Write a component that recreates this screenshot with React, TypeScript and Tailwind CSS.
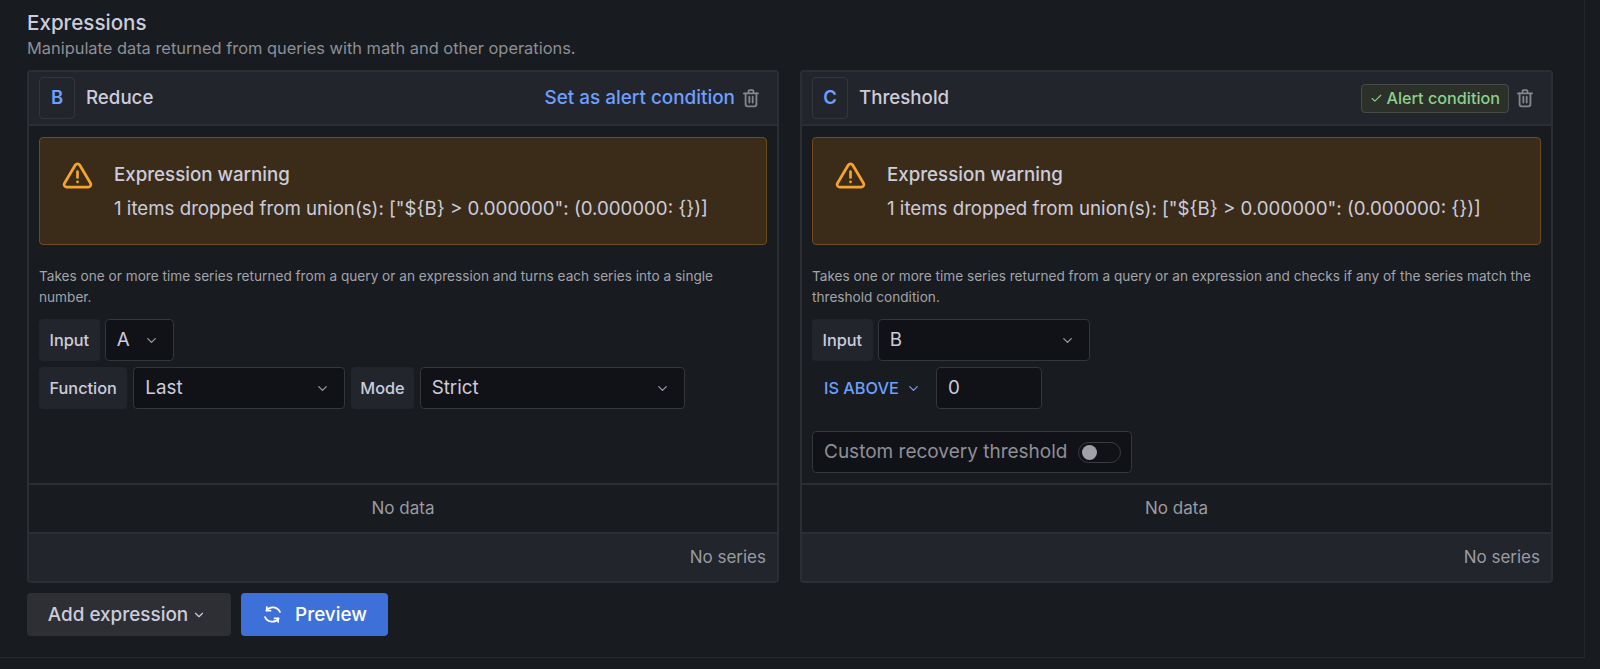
import React from 'react';
import { ChevronDown, Check } from 'lucide-react';

const TrashIcon = () => (
  <svg viewBox="0 0 24 24" className="w-[20px] h-[20px] text-[#85868c]" fill="none" stroke="currentColor" strokeWidth="2.2" strokeLinecap="round" strokeLinejoin="round">
    <path d="M3.5 6.5h17" />
    <path d="M9 6V4a1.5 1.5 0 0 1 1.5-1.5h3A1.5 1.5 0 0 1 15 4v2" />
    <path d="M5.5 6.5v13A2.5 2.5 0 0 0 8 22h8a2.5 2.5 0 0 0 2.5-2.5v-13" />
    <path d="M10 10.5v7M14 10.5v7" />
  </svg>
);

const WarningIcon = () => (
  <svg viewBox="0 0 24 24" className="w-[31px] h-[31px] text-[#f5a52c] shrink-0" fill="none" stroke="currentColor" strokeWidth="2.1" strokeLinecap="round" strokeLinejoin="round">
    <path d="M10.3 3.9 1.8 18.2A2 2 0 0 0 3.5 21h17a2 2 0 0 0 1.7-2.8L13.7 3.9a2 2 0 0 0-3.4 0Z" />
    <path d="M12 9v4.5" />
    <path d="M12 17h.01" />
  </svg>
);

const SyncIcon = () => (
  <svg viewBox="0 0 24 24" className="w-[21px] h-[21px]" fill="none" stroke="currentColor" strokeWidth="2" strokeLinecap="round" strokeLinejoin="round">
    <path d="M5 7.5A9 9 0 0 1 20.5 9" />
    <path d="M5.5 3.5v4.2h4.2" />
    <path d="M19 16.5A9 9 0 0 1 3.5 15" />
    <path d="M18.5 20.5v-4.2h-4.2" />
  </svg>
);

const Label = ({ children, padding = 'px-[10.5px]' }: { children: React.ReactNode; padding?: string }) => (
  <div className={`h-[42px] flex items-center rounded-sm bg-[#22252b] text-[16.3px] font-medium text-[#ccccdc] ${padding}`}>
    {children}
  </div>
);

const Select = ({ value, width }: { value: string; width: string }) => (
  <div className={`h-[42px] pl-[11px] pr-[14px] flex items-center justify-between rounded-sm bg-[#111217] border border-[#34363b] text-[18.8px] text-[#ccccdc] ${width}`}>
    <span>{value}</span>
    <ChevronDown size={15} className="text-[#9a9ba3]" />
  </div>
);

const Warning = () => (
  <div className="mx-[10px] mt-[11px] h-[108px] flex items-start pl-[22px] pt-[22px] rounded-sm bg-[#3b2c1a] border border-[#6c4c1f]">
    <WarningIcon />
    <div className="ml-[21px] mt-[1px] text-[#ccccdc] text-[18.7px]">
      <div className="h-[28px] leading-[28px] font-medium">Expression warning</div>
      <div className="mt-[6px] h-[28px] leading-[28px]">1 items dropped from union(s): ["${'{'}B{'}'} &gt; 0.000000": (0.000000: {'{}'})]</div>
    </div>
  </div>
);

const Footer = () => (
  <>
    <div className="h-[49px] flex items-center justify-center border-t-2 border-[#2c2e33] text-[17px] text-[#9a9ba3]">No data</div>
    <div className="h-[49px] flex items-center justify-end pr-[11px] border-t-2 border-[#2c2e33] bg-[#22252b] text-[17px] text-[#9a9ba3]">No series</div>
  </>
);

interface CardProps {
  letter: string;
  name: string;
  action: React.ReactNode;
  description: React.ReactNode;
  width: string;
  children: React.ReactNode;
}

const Card = ({ letter, name, action, description, width, children }: CardProps) => (
  <div className={`h-[513px] flex flex-col rounded-sm border-2 border-[#2c2e33] ${width}`}>
    <div className="h-[54px] shrink-0 flex items-center pl-[10px] pr-[16px] bg-[#22252b] border-b-2 border-[#2c2e33]">
      <div className="w-[36px] h-[42px] flex items-center justify-center rounded-sm border border-[#33363c] text-[18.5px] font-semibold text-[#6e9fff]">{letter}</div>
      <div className="ml-[11px] mt-[1px] text-[18.7px] font-medium text-[#ccccdc]">{name}</div>
      <div className="ml-auto flex items-center gap-[6px]">
        {action}
        <TrashIcon />
      </div>
    </div>
    <Warning />
    <div className="mx-[10px] mt-[21px] h-[42px] max-w-[722px] text-[13.63px] leading-[21px] text-[#a2a3ab]">{description}</div>
    <div className="flex-1 px-[10px] pt-[11px] flex flex-col gap-[6px]">{children}</div>
    <Footer />
  </div>
);

export default function App() {
  return (
    <div className="w-full h-[669px] bg-[#181b1f] font-['Inter',sans-serif] overflow-hidden">
      <div className="w-[1585px] h-[658px] pl-[27px] pt-[11px] border-r border-b border-[#24262b]">
        <div className="text-[20.6px] leading-[24px] font-medium text-[#ccccdc]">Expressions</div>
        <div className="mt-[3px] text-[16.4px] leading-[20px] text-[#8e8f97]">Manipulate data returned from queries with math and other operations.</div>
        <div className="mt-[12px] flex gap-[21px]">
          <Card
            letter="B"
            name="Reduce"
            width="w-[752px]"
            action={<span className="text-[18.9px] font-medium text-[#6e9fff]">Set as alert condition</span>}
            description={<>Takes one or more time series returned from a query or an expression and turns each series into a single number.</>}
          >
            <div className="flex gap-[5px]">
              <Label>Input</Label>
              <Select value="A" width="w-[69px]" />
            </div>
            <div className="flex gap-[6px]">
              <Label>Function</Label>
              <Select value="Last" width="w-[212px]" />
              <Label padding="px-[9px]">Mode</Label>
              <Select value="Strict" width="w-[265px]" />
            </div>
          </Card>
          <Card
            letter="C"
            name="Threshold"
            width="w-[753px]"
            action={
              <span className="h-[29px] px-[8px] flex items-center gap-[4px] rounded-sm bg-[#2b3028] border border-[#474b45] text-[16.2px] font-medium text-[#8ccf8c]">
                <Check size={13} />
                Alert condition
              </span>
            }
            description={<>Takes one or more time series returned from a query or an expression and checks if any of the series match the threshold condition.</>}
          >
            <div className="flex gap-[5px]">
              <Label>Input</Label>
              <Select value="B" width="w-[212px]" />
            </div>
            <div className="flex">
              <div className="h-[42px] w-[124px] pl-[12px] flex items-center gap-[7px] text-[16.3px] font-medium text-[#6e9fff]">
                IS ABOVE
                <ChevronDown size={15} />
              </div>
              <div className="h-[42px] w-[106px] pl-[11px] flex items-center rounded-sm bg-[#111217] border border-[#34363b] text-[18.8px] text-[#ccccdc]">0</div>
            </div>
            <div className="mt-[16px] w-[320px] h-[42px] pl-[11px] flex items-center rounded-sm bg-[#111217] border border-[#34363b] text-[19px] text-[#8e8f97]">
              Custom recovery threshold
              <div className="ml-[11px] w-[43px] h-[21px] flex items-center pl-[3px] rounded-full border border-[#3a3c42]">
                <div className="w-[15px] h-[15px] rounded-full bg-[#a0a1a8]" />
              </div>
            </div>
          </Card>
        </div>
        <div className="mt-[10px] flex gap-[10px]">
          <div className="w-[204px] h-[43px] pr-[4px] flex items-center justify-center gap-[4px] rounded-sm bg-[#2d2f34] text-[18.9px] font-medium text-[#ccccdc]">
            <span className="pt-[2px]">Add expression</span>
            <ChevronDown size={14} />
          </div>
          <div className="w-[147px] h-[43px] flex items-center justify-center gap-[12px] rounded-sm bg-[#3d71d9] text-[18.9px] font-medium text-white">
            <SyncIcon />
            <span className="pt-[2px]">Preview</span>
          </div>
        </div>
      </div>
    </div>
  );
}
